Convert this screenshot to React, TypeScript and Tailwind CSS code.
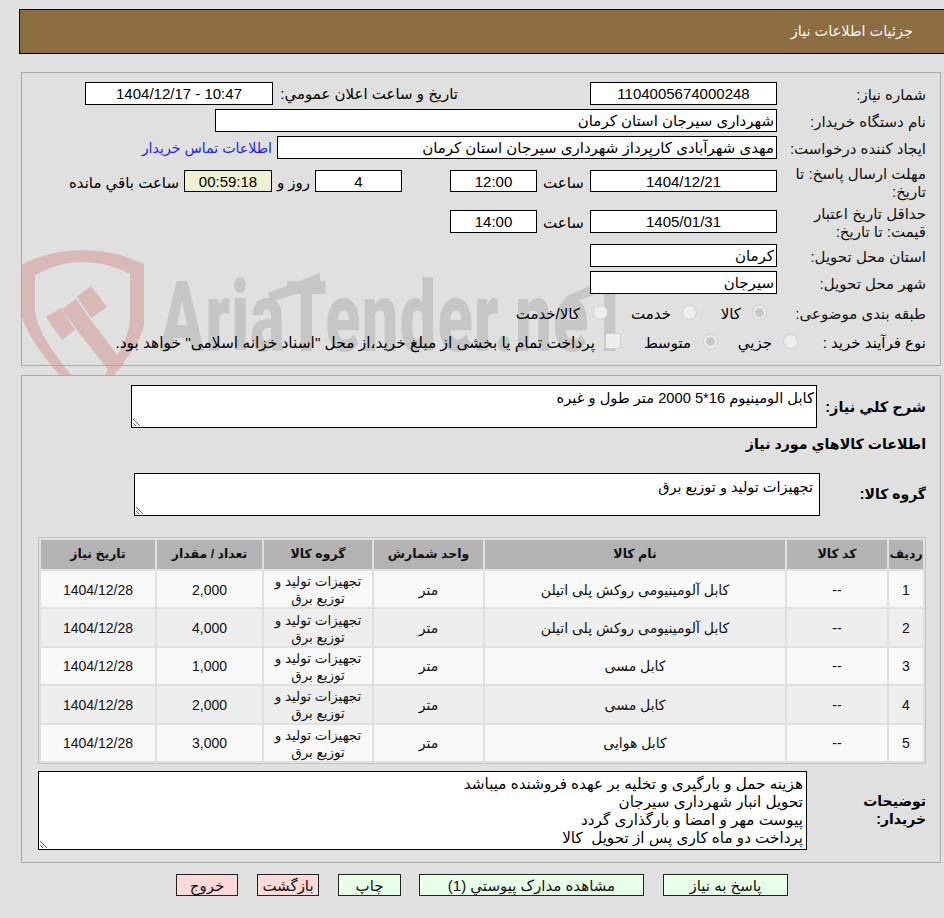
const font = { fontFamily: '"Liberation Sans", "DejaVu Sans", sans-serif' }

const rows = [
  { id: 1, name: 'کابل آلومینیومی روکش پلی اتیلن', qty: '2,000' },
  { id: 2, name: 'کابل آلومینیومی روکش پلی اتیلن', qty: '4,000' },
  { id: 3, name: 'کابل مسی', qty: '1,000' },
  { id: 4, name: 'کابل مسی', qty: '2,000' },
  { id: 5, name: 'کابل هوایی', qty: '3,000' },
]

function Box({ className, children }: { className: string; children?: React.ReactNode }) {
  return (
    <div className={`shrink-0 border border-black bg-white flex items-center pt-[2px] text-[15px] text-black ${className}`}>
      {children}
    </div>
  )
}

function Label({ className, children }: { className?: string; children: React.ReactNode }) {
  return <div className={`w-[149px] shrink-0 pl-2 text-[15px] leading-[18px] text-[#111] ${className ?? ''}`}>{children}</div>
}

function Radio({ checked, className }: { checked?: boolean; className?: string }) {
  return (
    <span className={`shrink-0 w-[15px] h-[15px] rounded-full border border-[#cfcfcf] bg-[#eeeeee] flex items-center justify-center ${className ?? ''}`}>
      {checked && <span className="w-[9px] h-[9px] rounded-full bg-[#c8c8c8]" />}
    </span>
  )
}

function Watermark() {
  return (
    <div className="absolute inset-0 overflow-hidden">
      <svg className="absolute left-0 top-0" width="620" height="303" viewBox="21 72 620 303">
        <path
          d="M21 265 Q50 250 82 250 Q115 250 144 264 L144 325 Q140 345 112 376 L60 376 Q21 330 21 310 Z M35 275 L35 312 Q38 335 72 376 L104 376 Q130 340 130 318 L130 274 Q108 262 82 262 Q58 262 35 275 Z"
          fill="#d9b8b8"
          fillRule="evenodd"
        />
        <path d="M46 317 L61 308 L75 330 L62 340 Z" fill="#d9b8b8" />
        <path d="M62 309 L76 299 L90 319 L124 364 L113 376 L76 329 Z" fill="#d9b8b8" />
        <path d="M77 297 L91 286 L107 307 L91 318 Z" fill="#d9b8b8" />
        {/* اریب بالای حرف T */}
        <path d="M268 293 L320 273 L320 287 L270 302 Z" fill="#c6c6c6" />
        <path d="M565 297 L619 273 L619 285 L567 305 Z" fill="#c6c6c6" />
      </svg>
      <div
        dir="ltr"
        className="absolute left-[139px] top-[197px] text-[98px] leading-[98px] font-black text-[#c6c6c6] whitespace-nowrap origin-top-left scale-x-[0.66] tracking-[2px]"
        style={{ fontFamily: 'Roboto, sans-serif' }}
      >
        AriaTender.neT
      </div>
    </div>
  )
}

export default function App() {
  return (
    <div dir="rtl" className="w-[944px] h-[918px] bg-[#e0e0e0] overflow-hidden" style={font}>
      <div className="pt-[9px] pl-[19px]">
        <div className="h-[45px] border-y border-l border-black bg-[#8c6d42] flex items-center pr-[31px] pt-[1px] text-[14.5px] text-[#f5f5f5]">
          جزئیات اطلاعات نیاز
        </div>
      </div>

      <div className="relative mt-[18px] mr-[3px] ml-[21px] pb-[9px]">
        <Watermark />
        {/* اطلاعات نیاز */}
        <div className="relative h-[294px] border border-[#aaaaaa] pt-[9px] pr-[14px]">
          <div className="flex items-center h-[23px]">
            <Label className="pt-[2px]">شماره نیاز:</Label>
            <Box className="w-[187px] h-[23px] justify-center">1104005674000248</Box>
            <div className="mr-[132px] w-[179px] pt-[2px] text-[15px] whitespace-nowrap">تاریخ و ساعت اعلان عمومي:</div>
            <Box className="mr-[6px] w-[188px] h-[23px] justify-center">
              <span dir="ltr">1404/12/17 - 10:47</span>
            </Box>
          </div>
          <div className="flex items-center h-[23px] mt-[4px]">
            <Label className="pt-[2px]">نام دستگاه خریدار:</Label>
            <Box className="w-[562px] h-[23px] pr-[2px]">شهرداری سیرجان استان کرمان</Box>
          </div>
          <div className="flex items-center h-[23px] mt-[4px]">
            <Label className="pt-[2px]">ایجاد کننده درخواست:</Label>
            <Box className="w-[500px] h-[23px] pr-[2px]">مهدی شهرآبادی کارپرداز شهرداری سیرجان استان کرمان</Box>
            <a className="mr-[5px] pt-[2px] text-[14.2px] text-[#2222ee] whitespace-nowrap">اطلاعات تماس خریدار</a>
          </div>
          <div className="flex items-start h-[40px] mt-[6px]">
            <Label>مهلت ارسال پاسخ: تا تاریخ:</Label>
            <Box className="mt-[5px] w-[187px] h-[22px] justify-center">1404/12/21</Box>
            <div className="mt-[7px] w-[53px] text-center text-[15px]">ساعت</div>
            <Box className="mt-[5px] w-[87px] h-[22px] justify-center">12:00</Box>
            <Box className="mt-[5px] mr-[48px] w-[87px] h-[22px] justify-center">4</Box>
            <div className="mt-[7px] w-[43px] text-center text-[15px]">روز و</div>
            <Box className="mt-[5px] w-[88px] h-[22px] justify-center !bg-[#f0f0d2]">00:59:18</Box>
            <div className="mt-[7px] mr-[5px] text-[15px] whitespace-nowrap">ساعت باقي مانده</div>
          </div>
          <div className="flex items-start h-[35px]">
            <Label>حداقل تاریخ اعتبار قیمت: تا تاریخ:</Label>
            <Box className="mt-[5px] w-[187px] h-[23px] justify-center">1405/01/31</Box>
            <div className="mt-[7px] w-[53px] text-center text-[15px]">ساعت</div>
            <Box className="mt-[5px] w-[87px] h-[23px] justify-center">14:00</Box>
          </div>
          <div className="flex items-center h-[23px] mt-[4px]">
            <Label className="pt-[2px]">استان محل تحویل:</Label>
            <Box className="w-[187px] h-[23px] pr-[2px]">کرمان</Box>
          </div>
          <div className="flex items-center h-[23px] mt-[4px]">
            <Label className="pt-[2px]">شهر محل تحویل:</Label>
            <Box className="w-[187px] h-[23px] pr-[2px]">سیرجان</Box>
          </div>
          <div className="flex items-center h-[22px] mt-[9px] text-[15px]">
            <Label>طبقه بندی موضوعی:</Label>
            <Radio checked className="mr-[10px] -mt-[4px]" />
            <span className="mr-[11px] w-[44px] whitespace-nowrap">کالا</span>
            <Radio className="-mt-[4px]" />
            <span className="mr-[11px] w-[63px] whitespace-nowrap">خدمت</span>
            <Radio className="-mt-[4px]" />
            <span className="mr-[13px] whitespace-nowrap">کالا/خدمت</span>
          </div>
          <div className="flex items-center h-[22px] mt-[7px] text-[15px]">
            <div className="w-[128px] shrink-0 whitespace-nowrap">نوع فرآیند خرید :</div>
            <Radio className="-mt-[4px]" />
            <span className="mr-[11px] w-[54px] whitespace-nowrap">جزيي</span>
            <Radio checked className="-mt-[4px]" />
            <span className="mr-[12px] w-[70px] whitespace-nowrap">متوسط</span>
            <span className="shrink-0 w-[16px] h-[16px] -mt-[4px] rounded-[2px] border border-[#cfcfcf] bg-[#eeeeee]" />
            <span className="mr-[10px] text-[15.4px] whitespace-nowrap">
              پرداخت تمام یا بخشی از مبلغ خرید،از محل "اسناد خزانه اسلامی" خواهد بود.
            </span>
          </div>
        </div>
      </div>

      {/* شرح و کالاها */}
      <div className="relative mr-[3px] ml-[21px] h-[488px] border border-[#aaaaaa] bg-[#e0e0e0] pr-[14px]">
        <div className="flex items-center pt-[9px]">
          <div className="w-[109px] shrink-0 pt-[2px] text-[14.5px] font-bold whitespace-nowrap">شرح كلي نياز:</div>
          <textarea
            readOnly
            dir="rtl"
            defaultValue="کابل الومینیوم 16*5 2000 متر طول و غیره"
            className="block w-[686px] h-[43px] border border-black bg-white px-[2px] py-[3px] text-[14.7px] leading-[18px] text-black outline-none"
            style={font}
          />
        </div>
        <div className="mt-[6px] text-[14.2px] leading-[20px] font-bold">اطلاعات كالاهاي مورد نياز</div>
        <div className="flex items-center mt-[19px]">
          <div className="w-[106px] shrink-0 text-[14px] font-bold whitespace-nowrap">گروه كالا:</div>
          <textarea
            readOnly
            dir="rtl"
            defaultValue="تجهیزات تولید و توزیع برق"
            className="block w-[686px] h-[43px] border border-black bg-white px-[6px] py-[4px] text-[14.5px] leading-[18px] text-black outline-none"
            style={font}
          />
        </div>

        <div className="mt-[21px] ml-[16px] border border-[#c4c4c4]">
          <table className="w-full table-fixed border-separate border-spacing-[2px] text-[14px] text-center text-[#111]">
            <colgroup>
              <col className="w-[34px]" />
              <col className="w-[100px]" />
              <col className="w-[300px]" />
              <col className="w-[109px]" />
              <col className="w-[108px]" />
              <col className="w-[105px]" />
              <col />
            </colgroup>
            <thead>
              <tr className="bg-[#b3b3b3] h-[29px] text-[12.5px]">
                <th className="font-bold">رديف</th>
                <th className="font-bold">کد کالا</th>
                <th className="font-bold">نام کالا</th>
                <th className="font-bold">واحد شمارش</th>
                <th className="font-bold">گروه کالا</th>
                <th className="font-bold">تعداد / مقدار</th>
                <th className="font-bold">تاریخ نیاز</th>
              </tr>
            </thead>
            <tbody>
              {rows.map((r) => (
                <tr key={r.id} className={`h-[36.4px] ${r.id % 2 === 0 ? 'bg-[#eeeeee]' : 'bg-[#f8f8f8]'}`}>
                  <td className="p-0 pt-[2px]">{r.id}</td>
                  <td className="p-0 pt-[2px]">--</td>
                  <td className="p-0 pt-[2px]">{r.name}</td>
                  <td className="p-0 pt-[2px]">متر</td>
                  <td className="p-0 pt-[2px] px-[8px] text-[13.5px] leading-[17px]">تجهیزات تولید و توزیع برق</td>
                  <td className="p-0 pt-[2px]">{r.qty}</td>
                  <td className="p-0 pt-[2px]">1404/12/28</td>
                </tr>
              ))}
            </tbody>
          </table>
        </div>

        <div className="flex items-center mt-[7px]">
          <div className="w-[119px] shrink-0 pl-[40px] text-[14px] leading-[18px] font-bold">توضیحات خریدار:</div>
          <textarea
            readOnly
            dir="rtl"
            defaultValue={'هزینه حمل و بارگیری و تخلیه بر عهده فروشنده میباشد\nتحویل انبار شهرداری سیرجان\nپیوست مهر و امضا و بارگذاری گردد\nپرداخت دو ماه کاری پس از تحویل  کالا'}
            className="block w-[769px] h-[79px] border border-black bg-white px-[3px] py-[3px] text-[15.2px] leading-[18px] text-black outline-none overflow-hidden"
            style={font}
          />
        </div>
      </div>

      {/* دکمه ها */}
      <div className="flex mt-[11px] mr-[156px] text-[15px] text-[#111]">
        <button className="w-[125px] h-[22px] border border-[#222] bg-[#e8ffe8]" style={font}>پاسخ به نیاز</button>
        <button className="mr-[19px] w-[225px] h-[22px] border border-[#222] bg-[#e8ffe8]" style={font}>مشاهده مدارک پیوستي (1)</button>
        <button className="mr-[18px] w-[63px] h-[22px] border border-[#222] bg-[#e8ffe8]" style={font}>چاپ</button>
        <button className="mr-[19px] w-[62px] h-[22px] border border-[#222] bg-[#ffd8d8]" style={font}>بازگشت</button>
        <button className="mr-[19px] w-[62px] h-[22px] border border-[#222] bg-[#ffd8d8]" style={font}>خروج</button>
      </div>
    </div>
  )
}
